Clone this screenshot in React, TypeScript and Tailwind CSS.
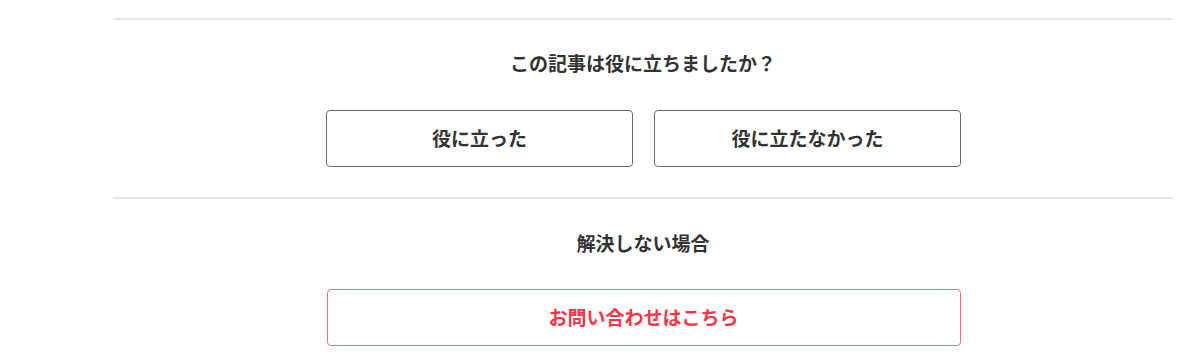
import React from "react";

const font = {
  fontFamily: '"Noto Sans CJK JP", "Noto Sans", sans-serif',
};

export default function App() {
  return (
    <div className="w-[1200px] h-[362px] bg-white overflow-hidden" style={font}>
      <div className="ml-[113px] w-[1060px] pt-[18px]">
        <section className="border-t-2 border-[#e6e6e6] pt-[31px] pb-[30px] flex flex-col items-center">
          <h2 className="text-[19px] leading-[24px] font-bold text-[#333]">この記事は役に立ちましたか？</h2>
          <div className="mt-[35px] flex gap-[21px] pl-[1px]">
            <button className="w-[307px] h-[57px] border border-[#6b6b6b] rounded-[4px] text-[19px] font-bold text-[#333] bg-white">
              役に立った
            </button>
            <button className="w-[307px] h-[57px] border border-[#6b6b6b] rounded-[4px] text-[19px] font-bold text-[#333] bg-white">
              役に立たなかった
            </button>
          </div>
        </section>
        <section className="border-t-2 border-[#e6e6e6] pt-[32px] flex flex-col items-center">
          <h2 className="text-[19px] leading-[24px] font-bold text-[#333]">解決しない場合</h2>
          <button className="mt-[34px] ml-[1px] w-[634px] h-[57px] border border-[#ff6f7b] rounded-[4px] text-[19px] font-bold text-[#ff3448] bg-white">
            お問い合わせはこちら
          </button>
        </section>
      </div>
    </div>
  );
}
